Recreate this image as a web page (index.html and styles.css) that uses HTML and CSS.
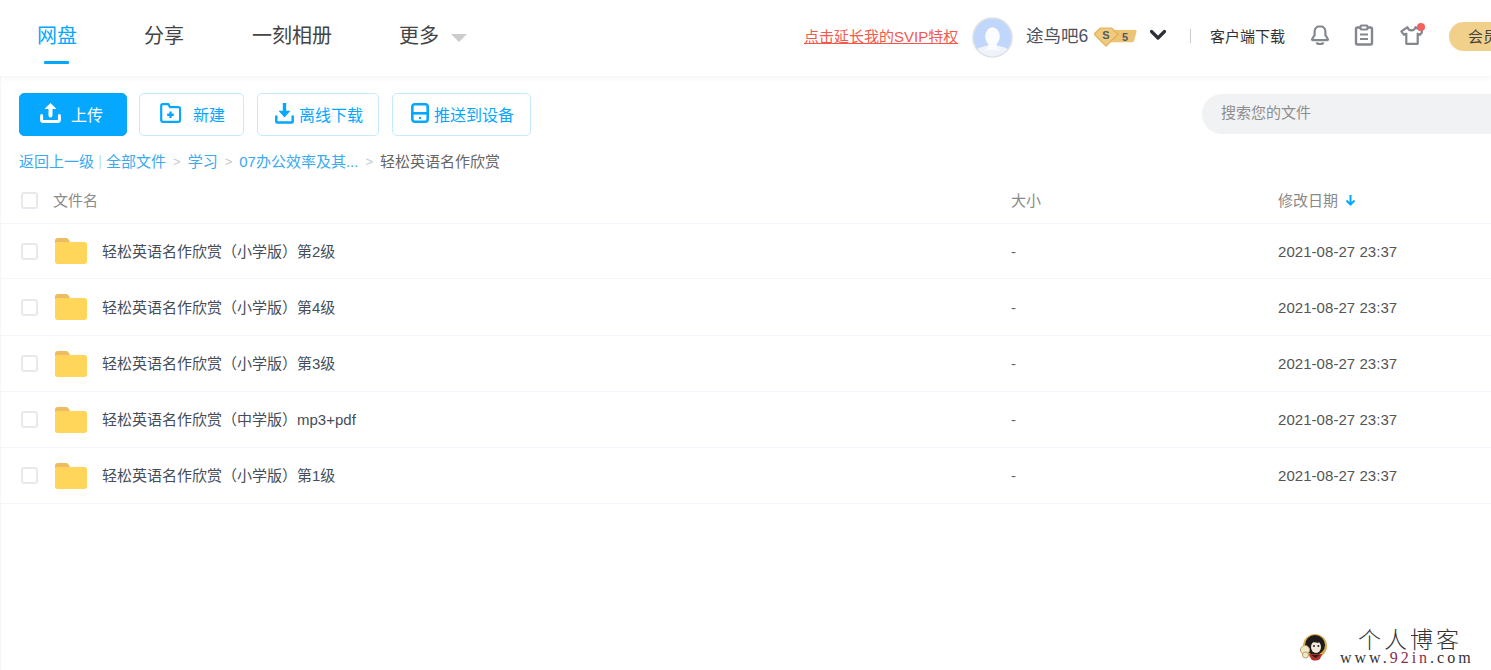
FILE: index.html
```html
<!DOCTYPE html>
<html lang="zh-CN">
<head>
<meta charset="utf-8">
<title>网盘</title>
<link rel="stylesheet" href="styles.css">
</head>
<body>
<header class="top">
  <nav class="nav">
    <a class="nav-item active">网盘</a>
    <a class="nav-item">分享</a>
    <a class="nav-item album">一刻相册</a>
    <a class="nav-item more">更多<i class="tri"></i></a>
  </nav>
  <div class="user">
    <a class="svip">点击延长我的SVIP特权</a>
    <svg class="avatar" viewBox="0 0 42 42" width="41" height="41">
      <defs><clipPath id="av"><circle cx="21" cy="21" r="19.5"/></clipPath></defs>
      <circle cx="21" cy="21" r="20" fill="#c0d6fb" stroke="#dfe0e3" stroke-width="1.6"/>
      <g clip-path="url(#av)">
        <ellipse cx="21" cy="36" rx="17" ry="7" fill="#eef3fb"/>
        <ellipse cx="21" cy="20" rx="7.500" ry="9.500" fill="#fbfcff"/>
        <path d="M17 26h8l1 6 4 2H12l4-2z" fill="#fbfcff"/>
      </g>
    </svg>
    <span class="uname">途鸟吧6</span>
    <svg class="badge" viewBox="0 0 43 20" width="43" height="20">
      <path d="M20 3h21c1.300 0 1.800.7 1.500 1.800L40 14c-.3.8-.8 1.200-1.700 1.200H17z" fill="#ecc474"/>
      <path d="M6.500 1h11L24 7.200 12 19 0 7.200z" fill="#f0cb7e" stroke="#e3b05a" stroke-width="1.200" stroke-linejoin="round"/>
      <text class="badge-s" x="12" y="11.500">S</text>
      <text class="badge-s" x="31" y="13.500">5</text>
    </svg>
    <svg class="chev" viewBox="0 0 18 12" width="18" height="12"><path d="M2.500 2.500l6.500 6.500 6.500-6.500" fill="none" stroke="#2b2f36" stroke-width="3.200" stroke-linecap="round" stroke-linejoin="round"/></svg>
    <span class="divider"></span>
    <a class="client">客户端下载</a>
    <svg class="ic bell" viewBox="0 0 20 20" width="20" height="20"><path d="M10 1.200c-3.600 0-5.400 2.600-5.400 5.600v3.400L2.200 14c-.4.700 0 1.200.8 1.200h14c.8 0 1.200-.5.800-1.200l-2.400-3.800V6.800c0-3-1.800-5.600-5.400-5.600z" fill="none" stroke="#83878e" stroke-width="2.200" stroke-linejoin="round"/><path d="M7 18.300c1.800 1 4.200 1 6 0" fill="none" stroke="#83878e" stroke-width="2.200" stroke-linecap="round"/></svg>
    <svg class="ic clip" viewBox="0 0 20 22" width="20" height="22"><path d="M6 3.500H3.500c-1 0-1.500.6-1.500 1.500v14c0 1 .5 1.500 1.500 1.500h13c1 0 1.500-.5 1.500-1.500V5c0-.9-.5-1.500-1.500-1.500H14" fill="none" stroke="#83878e" stroke-width="2.400"/><rect x="6.500" y="1.500" width="7" height="4" rx="1" fill="none" stroke="#83878e" stroke-width="2.200"/><path d="M6 10.500h8M6 15h8" stroke="#83878e" stroke-width="2.200"/></svg>
    <span class="shirt-wrap">
      <svg class="ic shirt" viewBox="0 0 23 19" width="23" height="19"><path d="M7.500 1.200L1.400 5.400l2.600 3.500 2.300-1.300V17.800h11.400V7.600l2.300 1.300 2.600-3.500L15.500 1.200c-.6 2-2 3.100-4 3.100S8.100 3.200 7.500 1.200z" fill="none" stroke="#83878e" stroke-width="2.200" stroke-linejoin="round"/></svg>
      <i class="dot"></i>
    </span>
    <a class="vip">会员中心</a>
  </div>
</header>
<main class="main">
  <div class="toolbar">
    <button class="btn primary">
      <svg viewBox="0 0 21 20" width="21" height="20"><path d="M10.500 0L4.500 6h4v6.500c0 1.200.9 1.900 2 1.900s2-.7 2-1.900V6h4z" fill="#fff"/><path d="M1.600 12.500v4.200c0 1.100.7 1.800 1.800 1.800h14.200c1.100 0 1.800-.7 1.800-1.800v-4.200" fill="none" stroke="#fff" stroke-width="3" stroke-linecap="round"/></svg>
      <span>上传</span>
    </button>
    <button class="btn new">
      <svg viewBox="0 0 21 20" width="21" height="20"><path d="M1.200 5V2.800C1.200 1.800 1.800 1.200 2.800 1.200h5.500l1.800 3h8.300c1 0 1.700.7 1.700 1.700V17c0 1-.7 1.800-1.700 1.800H2.900c-1 0-1.700-.8-1.700-1.800z" fill="none" stroke="#06a7ff" stroke-width="2.200"/><path d="M10.500 8.500v6.500M7.200 11.800h6.600" stroke="#06a7ff" stroke-width="2.400"/></svg>
      <span>新建</span>
    </button>
    <button class="btn offline">
      <svg viewBox="0 0 19 21" width="19" height="21"><path d="M7.800 0h3.400v7.800h4.300L9.500 14.500 3.500 7.800h4.300z" fill="#06a7ff"/><path d="M1.300 13.500v5c0 .6.400 1 1 1h14.400c.6 0 1-.4 1-1v-5" fill="none" stroke="#06a7ff" stroke-width="2.500" stroke-linecap="round"/></svg>
      <span>离线下载</span>
    </button>
    <button class="btn push">
      <svg viewBox="0 0 18 20" width="18" height="20"><rect x="1.300" y="1.300" width="15.400" height="17.400" rx="2.500" fill="none" stroke="#06a7ff" stroke-width="2.600"/><rect x="1" y="9" width="16" height="2.600" fill="#06a7ff"/><circle cx="9" cy="15" r="1.200" fill="#06a7ff"/></svg>
      <span>推送到设备</span>
    </button>
    <div class="search">搜索您的文件</div>
  </div>
  <div class="crumbs">
    <a>返回上一级</a><span class="bar">|</span><a>全部文件</a><span class="sep">&gt;</span><a>学习</a><span class="sep">&gt;</span><a>07办公效率及其...</a><span class="sep">&gt;</span><span class="cur">轻松英语名作欣赏</span>
  </div>
  <div class="row head">
    <div class="c-name"><i class="check"></i><span class="title">文件名</span></div>
    <div class="lift">大小</div>
    <div class="date-h lift">修改日期<svg viewBox="0 0 11 12" width="11" height="12"><path d="M5.500 1v9M1.500 6.500l4 4 4-4" fill="none" stroke="#06a7ff" stroke-width="2"/></svg></div>
  </div>
  <div class="row file short">
    <div class="c-name"><i class="check"></i><svg class="folder" viewBox="0 0 32 26" width="32" height="26"><use href="#fd"/></svg><span class="fname">轻松英语名作欣赏（小学版）第2级</span></div>
    <div class="dash">-</div><div class="date">2021-08-27 23:37</div>
  </div>
  <div class="row file tall">
    <div class="c-name"><i class="check"></i><svg class="folder" viewBox="0 0 32 26" width="32" height="26"><use href="#fd"/></svg><span class="fname">轻松英语名作欣赏（小学版）第4级</span></div>
    <div class="dash">-</div><div class="date">2021-08-27 23:37</div>
  </div>
  <div class="row file">
    <div class="c-name"><i class="check"></i><svg class="folder" viewBox="0 0 32 26" width="32" height="26"><use href="#fd"/></svg><span class="fname">轻松英语名作欣赏（小学版）第3级</span></div>
    <div class="dash">-</div><div class="date">2021-08-27 23:37</div>
  </div>
  <div class="row file">
    <div class="c-name"><i class="check"></i><svg class="folder" viewBox="0 0 32 26" width="32" height="26"><use href="#fd"/></svg><span class="fname">轻松英语名作欣赏（中学版）mp3+pdf</span></div>
    <div class="dash">-</div><div class="date">2021-08-27 23:37</div>
  </div>
  <div class="row file">
    <div class="c-name"><i class="check"></i><svg class="folder" viewBox="0 0 32 26" width="32" height="26"><use href="#fd"/></svg><span class="fname">轻松英语名作欣赏（小学版）第1级</span></div>
    <div class="dash">-</div><div class="date">2021-08-27 23:37</div>
  </div>
</main>
<div class="mark">
  <svg class="mark-pic" viewBox="0 0 28 28" width="28" height="28">
    <circle cx="15" cy="13" r="12" fill="#d8ab4e"/>
    <circle cx="15" cy="12" r="10" fill="#1f1b1a"/>
    <ellipse cx="16" cy="14" rx="5" ry="6" fill="#f4ead9"/>
    <path d="M9 6c3-2 8-2 12 1l-3 3c-3-1-6-1-8 1z" fill="#1f1b1a"/>
    <circle cx="14" cy="13" r="1" fill="#222"/><circle cx="18.400" cy="13" r="1" fill="#222"/>
    <path d="M9 21h13l-2 5c-3 2-7 2-9 0z" fill="#b5302c"/>
    <path d="M11 22h9l-4.500 3z" fill="#26201c"/>
    <circle cx="5" cy="17" r="4.500" fill="#f1e8c8" stroke="#b9a269"/>
    <circle cx="5.500" cy="22" r="3" fill="#f1e8c8" stroke="#b9a269"/>
  </svg>
  <div class="mark-text">
    <div class="mark-cn">个人博客</div>
    <div class="mark-en">www.<b>92in</b>.com</div>
  </div>
</div>
<svg class="defs" width="0" height="0"><defs><g id="fd"><path d="M0 3C0 1 1 0 2.700 0h8c1.300 0 2 .5 2.800 1.500L16 5H0z" fill="#ecbb62"/><path d="M0 6.500C0 5 1 4 2.500 4h27C31 4 32 5 32 6.500v17c0 1.500-1 2.500-2.500 2.500h-27C1 26 0 25 0 23.500z" fill="#ffd659"/></g></defs></svg>
</body>
</html>
```
FILE: styles.css
```css
* { box-sizing: border-box; }
html, body { margin: 0; padding: 0; height: 100%; overflow: hidden; background: #fff; }
body {
  width: 1491px; height: 670px; position: relative;
  font-family: "Liberation Sans", "Noto Sans CJK SC", sans-serif;
  color: #454d5a;
}
i { display: block; font-style: normal; }
.top {
  height: 76px; display: flex; align-items: center; background: #fff;
  box-shadow: 0 2px 6px rgba(0,0,0,.05); position: relative; overflow: hidden;
}
.nav { display: flex; height: 76px; padding-left: 37px; width: 804px; flex: none; }
.nav-item {
  font-size: 20px; line-height: 72px; color: #444; margin-right: 68px; position: relative; white-space: nowrap;
}
.nav-item.active { color: #06a7ff; margin-right: 67px; }
.nav-item.album { margin-right: 67px; }
.nav-item.active::after {
  content: ""; position: absolute; left: 7px; width: 25px; top: 61px; height: 3px; background: #06a7ff; border-radius: 1px;
}
.more { display: flex; align-items: center; height: 72px; }
.tri { margin: 4px 0 0 12px; border-left: 8px solid transparent; border-right: 8px solid transparent; border-top: 8px solid #ccc; }
.user { display: flex; align-items: center; flex: none; height: 76px; padding-bottom: 6px; white-space: nowrap; }
.svip { font-size: 15px; color: #f5574c; text-decoration: underline; width: 154px; }
.avatar { margin-left: 14px; flex: none; margin-top: 5px; }
.uname { font-size: 17.500px; color: #4b5261; margin-left: 13px; width: 62px; margin-bottom: 1px; }
.badge { margin-left: 6px; flex: none; margin-top: 3px; }
.badge-s { font: bold 11px "Liberation Sans", sans-serif; fill: #4f5a6b; text-anchor: middle; }
.chev { margin-left: 12px; flex: none; }
.divider { width: 1px; height: 14px; background: #ccc; margin-left: 23px; margin-top: 2px; }
.client { font-size: 15px; color: #333; margin-left: 19px; width: 75px; }
.ic { flex: none; display: block; }
.bell { margin-left: 25px; }
.clip { margin-left: 24px; }
.shirt-wrap { position: relative; margin-left: 26px; display: block; }
.dot { position: absolute; right: -2px; top: -3px; width: 8px; height: 8px; border-radius: 50%; background: #f56060; }
.vip {
  margin-left: 26px; height: 29px; width: 110px; border-radius: 15px 0 0 15px; background: #f1d08b; font-size: 15px;
  line-height: 29px; padding-left: 19px; color: #444; margin-top: 3px; flex: none;
}
.main { height: 594px; border-left: 1px solid #f6f6f6; }
.toolbar { display: flex; align-items: center; padding: 17px 0 0 18px; height: 60px; overflow: hidden; }
.btn {
  height: 43px; border-radius: 5px; border: 1px solid #c4ebff; background: #fff; color: #06a7ff;
  font: 16px "Liberation Sans", "Noto Sans CJK SC", sans-serif; display: flex; align-items: center;
  padding: 0; flex: none; margin-right: 13px;
}
.btn svg { flex: none; display: block; margin-bottom: 3px; }
.btn span { margin-bottom: 2px; }
.primary { width: 108px; background: #06a7ff; border-color: #06a7ff; color: #fff; padding-left: 20px; margin-right: 12px; }
.primary span { margin-left: 10px; }
.new { width: 105px; padding-left: 20px; }
.new span { margin-left: 12px; }
.offline { width: 122px; padding-left: 17px; }
.offline span { margin-left: 5px; }
.push { width: 139px; padding-left: 18px; margin-right: 12px; }
.push span { margin-left: 5px; }
.search {
  margin: 0 0 1px 659px; width: 320px; height: 40px; flex: none; border-radius: 20px; background: #f1f2f4; color: #8e8e8e;
  font-size: 15px; line-height: 37px; padding-left: 19px;
}
.crumbs { height: 42px; padding-left: 18px; font-size: 15px; line-height: 51px; display: flex; white-space: nowrap; }
.crumbs a { color: #3aa9ee; }
.bar { color: #b7dff7; margin: 0 4.200px; font-size: 14px; }
.sep { color: #c4cad3; margin: 0 7px; font-size: 13px; }
.cur { color: #666; }
.row {
  display: grid; grid-template-columns: 1010px 267px 1fr; align-items: center; border-bottom: 1px solid #f2f6fb;
  font-size: 15px; color: #454d5a;
}
.head { height: 46px; color: #8a8a8a; }
.file { height: 56px; }
.short { height: 55px; }
.tall { height: 57px; }
.lift { margin-bottom: 2px; }
.c-name { display: flex; align-items: center; padding-left: 20px; }
.check { width: 17px; height: 17px; border: 2px solid #e8e9ec; border-radius: 3px; background: #fff; flex: none; }
.title { margin-left: 15px; margin-bottom: 2px; }
.date-h { display: flex; align-items: center; }
.date-h svg { margin-left: 7px; display: block; }
.folder { margin-left: 17px; flex: none; display: block; }
.fname { margin-left: 15px; margin-bottom: 2px; white-space: nowrap; }
.dash { color: #666; }
.date { color: #555; letter-spacing: .05px; }
.defs { position: absolute; }
.mark {
  position: absolute; left: 1300px; top: 630px; width: 180px; height: 36px; display: flex;
  align-items: flex-start; background: rgba(255,255,255,.8);
}
.mark-pic { margin-top: 3px; flex: none; display: block; }
.mark-text { margin-left: 12px; }
.mark-cn { font-size: 23px; font-weight: 300; letter-spacing: 3px; line-height: 21px; color: #333; padding-left: 18px; white-space: nowrap; }
.mark-en { font: 16px/13px "Liberation Serif", serif; letter-spacing: 3px; color: #333; white-space: nowrap; }
.mark-en b { font-weight: 400; color: #8b2c49; }
```
